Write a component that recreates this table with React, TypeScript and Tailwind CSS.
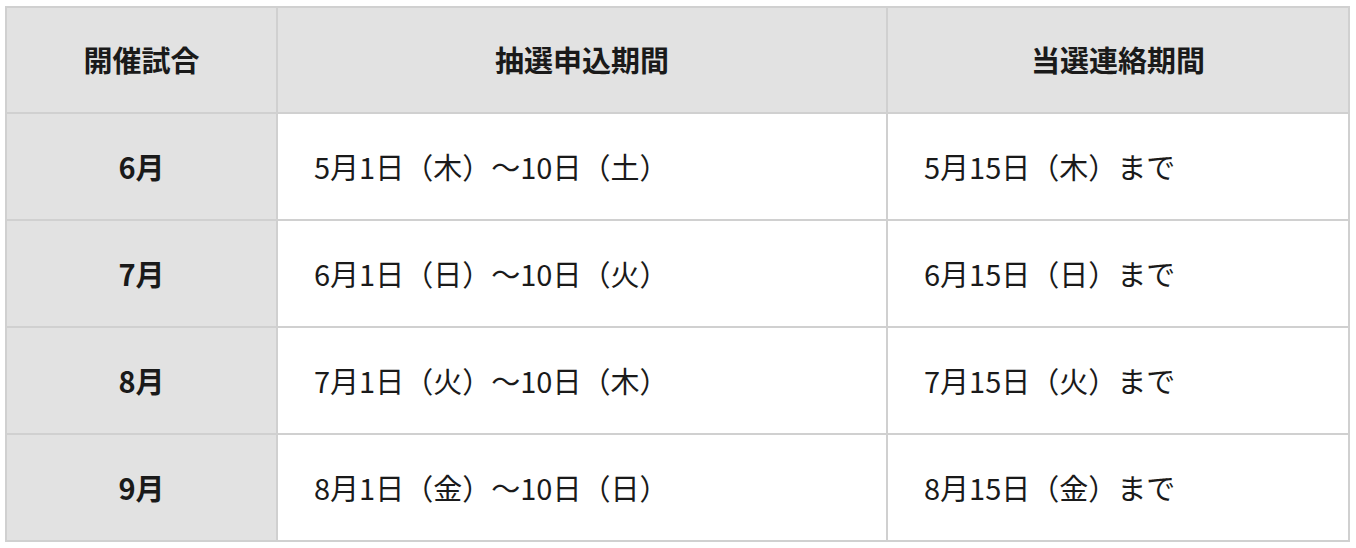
const rows = [
  { month: "6月", apply: "5月1日（木）～10日（土）", notice: "5月15日（木）まで" },
  { month: "7月", apply: "6月1日（日）～10日（火）", notice: "6月15日（日）まで" },
  { month: "8月", apply: "7月1日（火）～10日（木）", notice: "7月15日（火）まで" },
  { month: "9月", apply: "8月1日（金）～10日（日）", notice: "8月15日（金）まで" },
];

const font = { fontFamily: '"Noto Sans CJK JP", "Noto Sans", sans-serif' };

export default function App() {
  return (
    <div className="bg-white pl-[5px] pr-[6px] pt-[6px]" style={font}>
      <div className="grid grid-cols-[271px_610px_1fr] border-l-2 border-t-2 border-[#d0d0d0] text-[29px] text-[#1a1a1a]">
        <div className="flex h-[106px] items-center justify-center border-b-2 border-r-2 border-[#d0d0d0] bg-[#e2e2e2] font-bold">
          開催試合
        </div>
        <div className="flex h-[106px] items-center justify-center border-b-2 border-r-2 border-[#d0d0d0] bg-[#e2e2e2] font-bold">
          抽選申込期間
        </div>
        <div className="flex h-[106px] items-center justify-center border-b-2 border-r-2 border-[#d0d0d0] bg-[#e2e2e2] font-bold">
          当選連絡期間
        </div>
        {rows.map((r) => (
          <div key={r.month} className="contents">
            <div className="flex h-[107px] items-center justify-center border-b-2 border-r-2 border-[#d0d0d0] bg-[#e2e2e2] font-bold">
              {r.month}
            </div>
            <div className="flex h-[107px] items-center border-b-2 border-r-2 border-[#d0d0d0] pl-[36px]">
              {r.apply}
            </div>
            <div className="flex h-[107px] items-center border-b-2 border-r-2 border-[#d0d0d0] pl-[36px]">
              {r.notice}
            </div>
          </div>
        ))}
      </div>
    </div>
  );
}
